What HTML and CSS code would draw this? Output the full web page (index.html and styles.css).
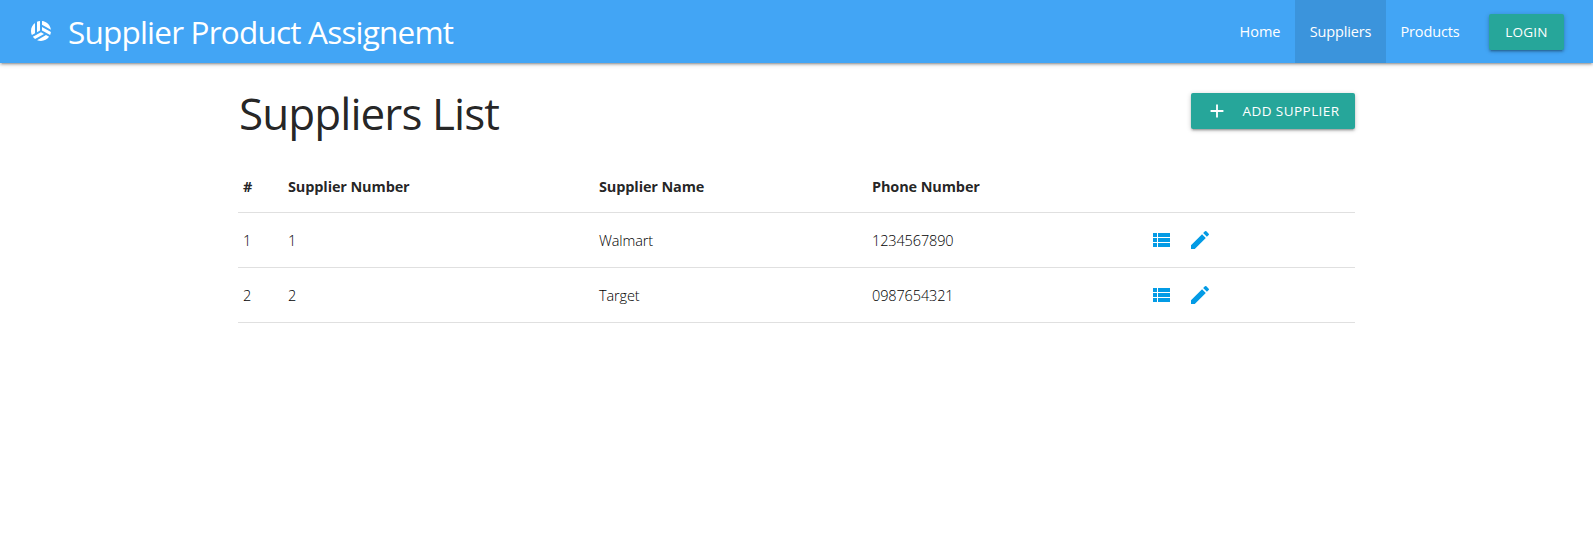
FILE: index.html
```html
<!DOCTYPE html>
<html lang="en">
<head>
<meta charset="utf-8">
<title>Supplier Product Assignemt</title>
<link rel="stylesheet" href="styles.css">
</head>
<body>
<nav class="navbar">
  <a class="brand">
    <svg class="brand-icon" viewBox="0 0 24 24"><path d="M6 4.01C3.58 5.84 2 8.73 2 12c0 1.46.32 2.85.89 4.11L6 14.31V4.01zM11 11.42V2.05c-1.06.11-2.07.38-3 .79v10.32l3-1.74zM12 13.15l-8.11 4.68c.61.84 1.34 1.59 2.18 2.2L15 14.89l-3-1.74zM13 7.96v3.46l8.11 4.68c.42-.93.7-1.93.82-2.98L13 7.96zM8.07 21.2c1.21.51 2.53.8 3.93.8 3.34 0 6.29-1.65 8.11-4.16L17 16.04l-8.93 5.16zM21.92 10.81c-.55-4.63-4.26-8.3-8.92-8.76v3.6l8.92 5.16z"/></svg>
    <span class="brand-name">Supplier Product Assignemt</span>
  </a>
  <div class="links">
    <a class="link home">Home</a>
    <a class="link suppliers active">Suppliers</a>
    <a class="link products">Products</a>
    <a class="btn login"><span>LOGIN</span></a>
  </div>
</nav>
<main class="container">
  <header class="heading">
    <h1 class="title">Suppliers List</h1>
    <a class="btn add"><svg class="plus" viewBox="0 0 24 24"><path d="M19 13h-6v6h-2v-6H5v-2h6V5h2v6h6v2z"/></svg><span>ADD SUPPLIER</span></a>
  </header>
  <table class="table">
    <colgroup><col class="c-index"><col class="c-number"><col class="c-name"><col class="c-phone"><col></colgroup>
    <thead>
      <tr><th>#</th><th>Supplier Number</th><th>Supplier Name</th><th>Phone Number</th><th></th></tr>
    </thead>
    <tbody>
      <tr><td>1</td><td>1</td><td>Walmart</td><td>1234567890</td>
        <td><div class="actions"><svg class="icon" viewBox="0 0 24 24"><path d="M4 14h4v-4H4v4zm0 5h4v-4H4v4zM4 9h4V5H4v4zm5 5h12v-4H9v4zm0 5h12v-4H9v4zM9 5v4h12V5H9z"/></svg><svg class="icon" viewBox="0 0 24 24"><path d="M3 17.25V21h3.75L17.81 9.94l-3.75-3.75L3 17.25zM20.71 7.04a1 1 0 0 0 0-1.41l-2.34-2.34a1 1 0 0 0-1.41 0l-1.83 1.83 3.75 3.75 1.83-1.83z"/></svg></div></td></tr>
      <tr><td>2</td><td>2</td><td>Target</td><td>0987654321</td>
        <td><div class="actions"><svg class="icon" viewBox="0 0 24 24"><path d="M4 14h4v-4H4v4zm0 5h4v-4H4v4zM4 9h4V5H4v4zm5 5h12v-4H9v4zm0 5h12v-4H9v4zM9 5v4h12V5H9z"/></svg><svg class="icon" viewBox="0 0 24 24"><path d="M3 17.25V21h3.75L17.81 9.94l-3.75-3.75L3 17.25zM20.71 7.04a1 1 0 0 0 0-1.41l-2.34-2.34a1 1 0 0 0-1.41 0l-1.83 1.83 3.75 3.75 1.83-1.83z"/></svg></div></td></tr>
    </tbody>
  </table>
</main>
</body>
</html>
```
FILE: styles.css
```css
* { box-sizing: border-box; }
body { margin: 0; background: #fff; color: rgba(0,0,0,.87); font: 14.5px/22px "Segoe UI", "Open Sans", "Noto Sans", sans-serif; }
.navbar { display: flex; justify-content: space-between; height: 63px; padding: 0 29px; background: #42a5f5; color: #fff; box-shadow: 0 2px 2px 0 rgba(0,0,0,.14), 0 3px 1px -2px rgba(0,0,0,.12), 0 1px 5px 0 rgba(0,0,0,.2); }
.brand { display: flex; align-items: center; }
.brand-icon { width: 24px; height: 24px; margin-bottom: 1px; fill: #fff; }
.brand-name { margin-left: 15px; font-size: 31.5px; line-height: 63px; letter-spacing: -.8px; white-space: nowrap; }
.links { display: flex; align-items: center; line-height: 63px; }
.link { height: 63px; text-align: center; letter-spacing: -.15px; }
.home { width: 70px; letter-spacing: 0; }
.suppliers { width: 91px; }
.products { width: 88px; }
.active { background: rgba(0,0,0,.1); }
.btn { display: flex; align-items: center; justify-content: center; height: 36px; border-radius: 2px; background: #26a69a; color: #fff; font-size: 13.5px; line-height: 36px; white-space: nowrap; box-shadow: 0 2px 2px 0 rgba(0,0,0,.14), 0 3px 1px -2px rgba(0,0,0,.12), 0 1px 5px 0 rgba(0,0,0,.2); }
.login { width: 75px; margin-left: 15px; letter-spacing: .2px; }
.container { width: 1117px; margin: 0 auto; }
.heading { display: flex; justify-content: space-between; height: 98px; padding-top: 30px; }
.title { margin: -8px 0 0 1px; font-size: 44px; line-height: 56px; font-weight: 400; letter-spacing: -.93px; }
.add { width: 164px; letter-spacing: .45px; }
.plus { width: 22px; height: 22px; margin-right: 14px; fill: #fff; }
.table { width: 100%; table-layout: fixed; border-collapse: collapse; }
.c-index { width: 45px; }
.c-number { width: 311px; }
.c-name { width: 273px; }
.c-phone { width: 273px; }
th, td { height: 55px; padding: 0 5px; text-align: left; border-bottom: 1px solid #e0e0e0; letter-spacing: -.13px; }
th { height: 51px; padding-top: 1px; font-weight: 700; }
td { padding-top: 3px; color: #000; font-weight: 300; }
.actions { display: flex; gap: 15px; margin: -2px 0 0 4px; }
.icon { width: 24px; height: 24px; fill: #039be5; }
```
